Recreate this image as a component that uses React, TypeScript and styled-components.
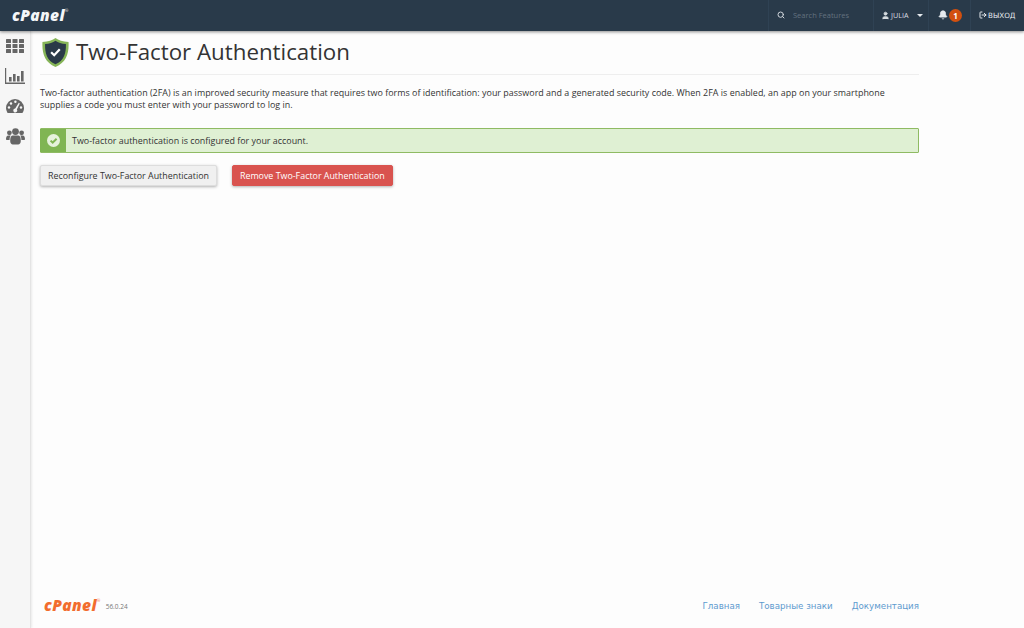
import React from "react";
import styled, { createGlobalStyle } from "styled-components";
import { Search, User, Bell, LogOut } from "lucide-react";

const Global = createGlobalStyle`
  html, body { margin: 0; padding: 0; height: 100%; }
  body { background: #fdfdfd; font-family: "Open Sans", "DejaVu Sans", sans-serif; color: #333; overflow: hidden; }
  #root { height: 100%; }
`;
const Page = styled.div`
  width: 1024px; height: 628px; display: flex; flex-direction: column; overflow: hidden;
`;
const TopBar = styled.header`
  height: 31px; flex: none; background: #293a4a; display: flex; align-items: center;
  box-shadow: 0 1px 3px rgba(0,0,0,.45); position: relative; z-index: 2;
`;
const Logo = styled.span<{ $footer?: boolean }>`
  font-family: "Open Sans", sans-serif; font-style: italic; font-weight: 800;
  font-size: 15.5px;
  letter-spacing: .4px;
  color: ${p => (p.$footer ? "#f26c2d" : "#f4f6f8")};
  line-height: 1; display: inline-flex; align-items: flex-start;
`;
const Registered = styled.sup`
  font-size: 4px; line-height: 1; margin: 1px 0 0 0; font-weight: 400;
`;
const TopLogoWrap = styled.div`
  margin-left: 12px; margin-top: -1px;
`;
const TopRight = styled.nav`
  margin-left: auto; height: 100%; display: flex; align-items: stretch;
`;
const TopCell = styled.div<{ $w: number }>`
  width: ${p => p.$w}px; box-sizing: border-box; border-left: 1px solid #2f4254; padding-bottom: 1px;
  display: flex; align-items: center; color: #e6eaee; font-size: 7.2px;
`;
const SearchCell = styled(TopCell)`
  padding-left: 8px; gap: 8px; color: #63717f; font-size: 7.5px;
  svg { color: #cfd5db; flex: none; }
`;
const UserCell = styled(TopCell)`
  padding-left: 7px; gap: 1px; color: #d8dde2;
`;
const Caret = styled.span`
  width: 0; height: 0; margin-left: 8px; margin-top: 1px;
  border-left: 3px solid transparent; border-right: 3px solid transparent; border-top: 3px solid #e6eaee;
`;
const BellCell = styled(TopCell)`
  padding-left: 9px; gap: 1px;
`;
const Badge = styled.span`
  width: 13px; height: 13px; border-radius: 50%; background: #d2500f; color: #fff;
  font-size: 8px; font-weight: 700; display: flex; align-items: center; justify-content: center;
`;
const LogoutCell = styled(TopCell)`
  padding-left: 8px; gap: 1px; font-family: "DejaVu Sans", sans-serif; font-size: 7.2px;
`;
const Body = styled.div`
  flex: 1; display: flex; min-height: 0;
`;
const SideBar = styled.aside`
  width: 30px; flex: none; background: #f6f6f6; border-right: 1px solid #e4e4e4;
  box-shadow: 1px 0 2px rgba(0,0,0,.08);
  display: flex; flex-direction: column; align-items: center; padding-top: 8px; gap: 15px;
  svg { display: block; color: #666; }
`;
const Main = styled.main`
  flex: 1; display: flex; flex-direction: column; padding: 0 105px 0 9px; min-width: 0;
`;
const TitleRow = styled.div`
  height: 43px; display: flex; align-items: center; gap: 7px; border-bottom: 1px solid #eee;
  padding-left: 2px;
`;
const Title = styled.h1`
  margin: 0; font-size: 22.3px; font-weight: 400; color: #333; line-height: 1;
`;
const Intro = styled.p`
  margin: 12px 0 0; font-size: 8.92px; letter-spacing: .02px; line-height: 12px; color: #333;
`;
const Alert = styled.div`
  margin-top: 17px; height: 25px; box-sizing: border-box; border: 1px solid #8fbb63; border-radius: 1px;
  background: #dff0d3; display: flex; align-items: stretch; font-size: 8.92px; color: #333;
`;
const AlertIcon = styled.div`
  width: 26px; background: #80b553; display: flex; align-items: center; justify-content: center; margin-left: -1px;
`;
const AlertText = styled.div`
  display: flex; align-items: center; padding-left: 6px;
`;
const Actions = styled.div`
  margin-top: 12px; display: flex; gap: 15px;
`;
const Button = styled.button<{ $danger?: boolean }>`
  height: 21px; padding: 0 7px; font: inherit; font-size: 8.88px; border-radius: 2px; cursor: pointer;
  border: 1px solid ${p => (p.$danger ? "#d9534f" : "#ddd")};
  background: ${p => (p.$danger ? "#d9534f" : "#f0f0f0")};
  color: ${p => (p.$danger ? "#fff" : "#333")};
  box-shadow: 0 1px 3px rgba(0,0,0,.3);
`;
const Footer = styled.footer`
  margin-top: auto; height: 30px; flex: none; display: flex; align-items: flex-start; box-sizing: border-box;
`;
const Brand = styled.div`
  display: flex; align-items: center; gap: 3px; padding-left: 4px; height: 15px;
`;
const Version = styled.span`
  font-size: 6.5px; color: #777; margin-top: 2px; margin-left: 2px;
`;
const FooterLinks = styled.div`
  margin-left: auto; display: flex; gap: 19px; height: 15px; align-items: center;
`;
const FooterLink = styled.a`
  font-family: "DejaVu Sans", sans-serif; font-size: 8.7px; color: #5d9bcf; text-decoration: none;
`;

const GridIcon = () => (
  <svg width="18" height="14" viewBox="0 0 18 14" fill="currentColor">
    {[0, 5, 10].map(y => [0, 6.5, 13].map(x => <rect key={`${x}-${y}`} x={x} y={y} width="5" height="4" rx=".5" />))}
  </svg>
);
const ChartIcon = () => (
  <svg width="20" height="16" viewBox="0 0 20 16" fill="currentColor">
    <path d="M0 0h1.2v14.6H20V16H0z" />
    <rect x="4" y="9" width="2.6" height="4.5" />
    <rect x="8" y="6" width="2.6" height="7.5" />
    <rect x="12" y="8" width="2.6" height="5.5" />
    <rect x="16" y="3" width="2.6" height="10.5" />
  </svg>
);
const GaugeIcon = () => (
  <svg width="18" height="14" viewBox="0 0 18 14">
    <path fill="currentColor" d="M9 0a9 9 0 0 1 9 9c0 1.8-.5 3.5-1.4 4.7-.2.2-.4.3-.7.3H2.1c-.3 0-.5-.1-.7-.3A9 9 0 0 1 0 9a9 9 0 0 1 9-9z" />
    <g fill="#f6f6f6">
      <circle cx="3" cy="8.5" r="1.2" /><circle cx="5" cy="4.5" r="1.2" /><circle cx="9.4" cy="2.8" r="1.2" /><circle cx="15" cy="8.5" r="1.2" />
      <path d="M12.8 3.8l1 .6-3 6a1.9 1.9 0 1 1-1.6-.8z" />
    </g>
  </svg>
);
const UsersIcon = () => (
  <svg width="19" height="17" viewBox="0 0 19 17" fill="currentColor">
    <circle cx="9.5" cy="3.6" r="3.4" /><circle cx="3.4" cy="4.8" r="2.4" /><circle cx="15.6" cy="4.8" r="2.4" />
    <path d="M0 11c0-2 .8-3.6 2.4-3.6h2.4c-.8 1-1.2 2.4-1.2 4.6H1c-.6 0-1-.4-1-1zM19 11c0-2-.8-3.6-2.4-3.6h-2.4c.8 1 1.2 2.4 1.2 4.6H18c.6 0 1-.4 1-1z" />
    <path d="M6.6 7.6h5.8c1.8 0 2.4 2.2 2.4 5.4 0 2.2-1.2 3.4-2.6 3.4H6.8c-1.4 0-2.6-1.2-2.6-3.4 0-3.2.6-5.4 2.4-5.4z" />
  </svg>
);
const Shield = () => (
  <svg width="27" height="29" viewBox="0 0 29 31">
    <path fill="#86b558" d="M14.5 0c3 2.6 8 4 14 4.2.6 12-2.2 21.8-14 26.8C2.7 26-.1 16.2.5 4.2 6.5 4 11.5 2.6 14.5 0z" />
    <path fill="#2a3a48" d="M14.5 3c2.8 2 6.6 3.2 11.2 3.5.3 10-2 18-11.2 21.7C5.3 24.5 3 16.5 3.3 6.5 7.9 6.2 11.7 5 14.5 3z" />
    <path fill="none" stroke="#fff" strokeWidth="2.4" d="M9.8 15.2l3.3 3.2 6-6.4" />
  </svg>
);
const CheckBadge = () => (
  <svg width="13" height="13" viewBox="0 0 13 13">
    <circle cx="6.5" cy="6.5" r="6.5" fill="#e6f2dc" />
    <path fill="none" stroke="#80b553" strokeWidth="2" d="M3.6 6.6l2.1 2.1 3.9-4" />
  </svg>
);

export default function App() {
  return (
    <Page>
      <Global />
      <TopBar>
        <TopLogoWrap><Logo>cPanel<Registered>®</Registered></Logo></TopLogoWrap>
        <TopRight>
          <SearchCell $w={105}><Search size={8} strokeWidth={3} /> Search Features</SearchCell>
          <UserCell $w={55}><User size={9} fill="currentColor" /> JULIA <Caret /></UserCell>
          <BellCell $w={42}><Bell size={10} fill="currentColor" /><Badge>1</Badge></BellCell>
          <LogoutCell $w={54}><LogOut size={8} strokeWidth={3} /> ВЫХОД</LogoutCell>
        </TopRight>
      </TopBar>
      <Body>
        <SideBar>
          <GridIcon />
          <ChartIcon />
          <GaugeIcon />
          <UsersIcon />
        </SideBar>
        <Main>
          <TitleRow>
            <Shield />
            <Title>Two-Factor Authentication</Title>
          </TitleRow>
          <Intro>
            Two-factor authentication (2FA) is an improved security measure that requires two forms of identification: your password and a generated security code. When 2FA is enabled, an app on your smartphone supplies a code you must enter with your password to log in.
          </Intro>
          <Alert>
            <AlertIcon><CheckBadge /></AlertIcon>
            <AlertText>Two-factor authentication is configured for your account.</AlertText>
          </Alert>
          <Actions>
            <Button>Reconfigure Two-Factor Authentication</Button>
            <Button $danger>Remove Two-Factor Authentication</Button>
          </Actions>
          <Footer>
            <Brand>
              <Logo $footer>cPanel<Registered>®</Registered></Logo>
              <Version>56.0.24</Version>
            </Brand>
            <FooterLinks>
              <FooterLink>Главная</FooterLink>
              <FooterLink>Товарные знаки</FooterLink>
              <FooterLink>Документация</FooterLink>
            </FooterLinks>
          </Footer>
        </Main>
      </Body>
    </Page>
  );
}
